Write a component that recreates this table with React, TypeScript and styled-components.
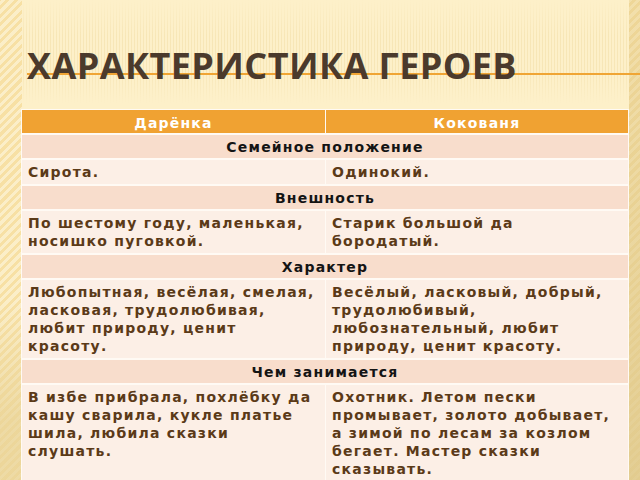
import React from "react";
import styled, { createGlobalStyle } from "styled-components";

const Global = createGlobalStyle`
  html, body { margin: 0; padding: 0; }
  body { width: 640px; height: 480px; overflow: hidden; }
`;

const Page = styled.div`
  position: relative;
  width: 640px;
  height: 480px;
  overflow: hidden;
  background-color: #fdf0c9;
  background-image:
    linear-gradient(180deg, #fdf0c9 0px, rgba(253,240,201,0) 36px, rgba(253,240,201,0) 70px, #fdf0c9 104px),
    repeating-linear-gradient(90deg, rgba(226, 196, 120, 0.0) 0px, rgba(226, 196, 120, 0.0) 2px, rgba(226, 196, 120, 0.45) 3px);
  background-size: 640px 104px, 640px 104px;
  background-position: 0 0, 0 0;
  background-repeat: no-repeat;
  box-sizing: border-box;
  padding: 48px 0 0 0;
  display: flex;
  flex-direction: column;
  font-family: "DejaVu Sans", Verdana, sans-serif;
`;

const EdgeLeft = styled.div`
  position: absolute;
  left: 0;
  top: 0;
  bottom: 0;
  width: 22px;
  background:
    linear-gradient(180deg, rgba(253,240,201,0) 0px, rgba(253,240,201,0) 300px, rgba(232, 210, 150, 0.7) 420px),
    repeating-linear-gradient(-45deg, #f7e0a4 0px, #f7e0a4 3px, #fbeec8 3px, #fbeec8 6px);
`;

const EdgeRight = styled.div`
  position: absolute;
  right: 0;
  top: 0;
  bottom: 0;
  width: 11px;
  background:
    linear-gradient(180deg, rgba(230, 208, 150, 0.3), rgba(222, 200, 140, 0.8)),
    repeating-linear-gradient(-45deg, #f2d998 0px, #f2d998 3px, #f8e6b4 3px, #f8e6b4 6px);
`;

const TitleBar = styled.div`
  position: relative;
  flex-shrink: 0;
  padding-left: 27px;
  height: 61px;
  background: linear-gradient(180deg, transparent 25px, #f0a534 25px, #f0a534 27px, transparent 27px);
  background-position: 27px 0;
  background-repeat: no-repeat;
`;

const Title = styled.h1`
  margin: 0;
  font-family: "Open Sans", "DejaVu Sans", sans-serif;
  font-weight: 700;
  font-size: 36px;
  line-height: 36px;
  color: #4b3a2c;
  letter-spacing: 0.4px;
`;

const Grid = styled.div`
  position: relative;
  flex-shrink: 0;
  margin: 0 0 0 21px;
  width: 608px;
  box-sizing: border-box;
  display: grid;
  grid-template-columns: 303px 1fr;
  gap: 2px 1px;
  padding: 1px;
  background: #fffaf4;
`;

const HeadCell = styled.div`
  background: #f0a232;
  color: #ffffff;
  font-weight: 700;
  font-size: 14px;
  line-height: 18px;
  letter-spacing: 1.2px;
  padding: 4px 6px 1px;
  text-align: center;
`;

const SectionCell = styled.div`
  grid-column: 1 / -1;
  background: #f8ddcc;
  color: #141414;
  font-weight: 700;
  font-size: 14px;
  line-height: 18px;
  letter-spacing: 1.2px;
  padding: 3px 6px 2px;
  text-align: center;
`;

const DataCell = styled.div<{ $tall?: boolean }>`
  background: #fcefe6;
  color: #5b3a18;
  font-weight: 700;
  font-size: 14px;
  line-height: 18px;
  letter-spacing: 1.25px;
  padding: 3px 6px 3px;
  white-space: nowrap;
  min-height: ${(p) => (p.$tall ? "120px" : "0")};
`;

type Row = { section: string; left: string[]; right: string[] };

const rows: Row[] = [
  { section: "Семейное положение", left: ["Сирота."], right: ["Одинокий."] },
  {
    section: "Внешность",
    left: ["По шестому году, маленькая,", "носишко пуговкой."],
    right: ["Старик большой да", "бородатый."],
  },
  {
    section: "Характер",
    left: ["Любопытная, весёлая, смелая,", "ласковая, трудолюбивая,", "любит природу, ценит", "красоту."],
    right: ["Весёлый, ласковый, добрый,", "трудолюбивый,", "любознательный, любит", "природу, ценит красоту."],
  },
  {
    section: "Чем занимается",
    left: ["В избе прибрала, похлёбку да", "кашу сварила, кукле платье", "шила, любила сказки", "слушать."],
    right: ["Охотник. Летом пески", "промывает, золото добывает,", "а зимой по лесам за козлом", "бегает. Мастер сказки", "сказывать."],
  },
];

const Lines = ({ lines }: { lines: string[] }) => (
  <>
    {lines.map((l, i) => (
      <React.Fragment key={i}>
        {i > 0 && <br />}
        {l}
      </React.Fragment>
    ))}
  </>
);

export default function App() {
  return (
    <Page>
      <Global />
      <EdgeLeft />
      <EdgeRight />
      <TitleBar>
        <Title>ХАРАКТЕРИСТИКА ГЕРОЕВ</Title>
      </TitleBar>
      <Grid>
        <HeadCell>Дарёнка</HeadCell>
        <HeadCell>Кокованя</HeadCell>
        {rows.map((r, i) => (
          <React.Fragment key={r.section}>
            <SectionCell>{r.section}</SectionCell>
            <DataCell $tall={i === rows.length - 1}>
              <Lines lines={r.left} />
            </DataCell>
            <DataCell $tall={i === rows.length - 1}>
              <Lines lines={r.right} />
            </DataCell>
          </React.Fragment>
        ))}
      </Grid>
    </Page>
  );
}
